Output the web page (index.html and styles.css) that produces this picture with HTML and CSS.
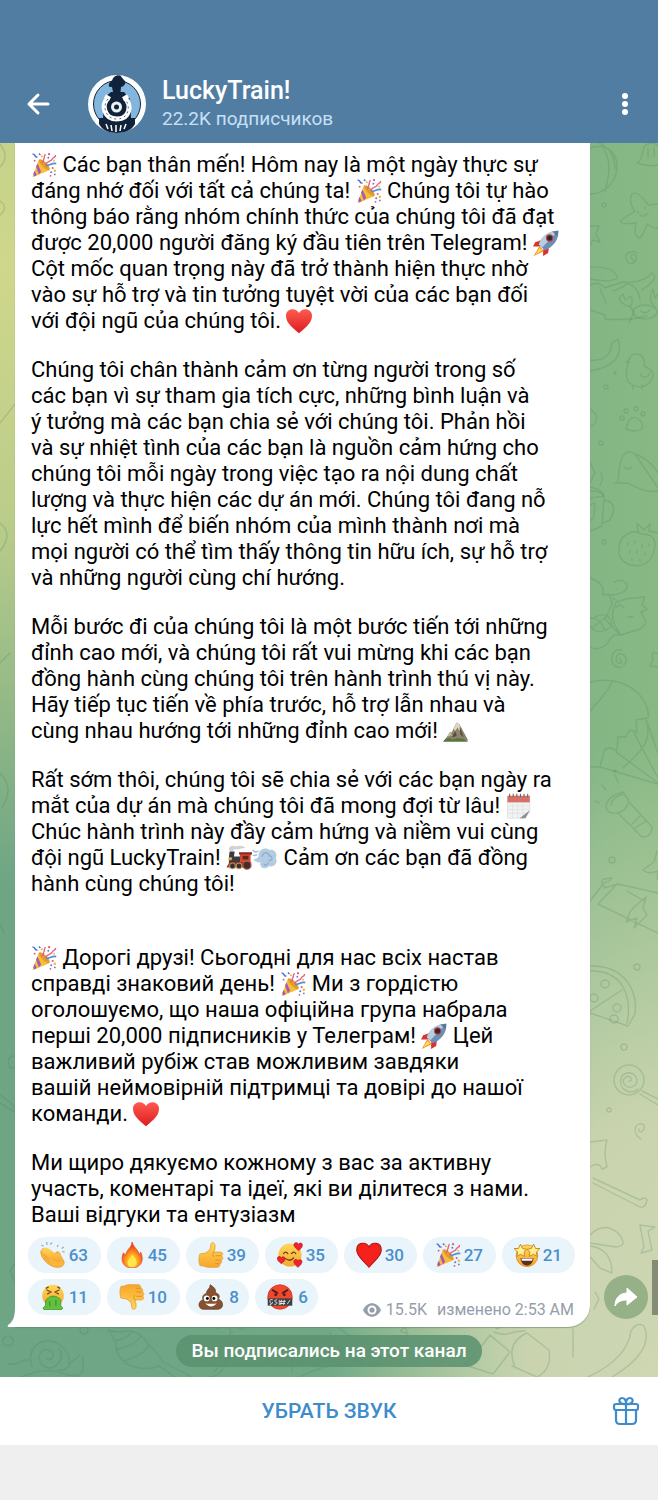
FILE: index.html
```html
<!DOCTYPE html>
<html lang="ru">
<head>
<meta charset="utf-8">
<meta name="viewport" content="width=device-width, initial-scale=1">
<title>LuckyTrain!</title>
<link rel="stylesheet" href="styles.css">
</head>
<body>
<svg class="sprite" aria-hidden="true">
  <defs>
    <linearGradient id="gold" x1="0" y1="0" x2="0" y2="1"><stop offset="0" stop-color="#ffd75a"/><stop offset="1" stop-color="#f7a62b"/></linearGradient>
    <linearGradient id="red" x1="0" y1="0" x2="0" y2="1"><stop offset="0" stop-color="#ff5a4e"/><stop offset="1" stop-color="#dd1c22"/></linearGradient>
    <radialGradient id="fireg" cx=".5" cy=".75" r=".7"><stop offset="0" stop-color="#ffe94a"/><stop offset=".4" stop-color="#ffa51e"/><stop offset="1" stop-color="#e8281a"/></radialGradient>
  </defs>
  <symbol id="party" viewBox="0 0 36 36">
    <path d="M11 10 L26 25 L2 35 Z" fill="#f8bd35"/>
    <path d="M9 16 L14 27 L11 31 L7 20 Z M5 26 L8 32 L5 34 L3 31 Z" fill="#a45bb5"/>
    <ellipse cx="18.500" cy="17.500" rx="3.500" ry="10" transform="rotate(-45 18.500 17.500)" fill="#e39b2c"/>
    <path d="M15 15 C19 13 17 7 20 3 M20 18 C23 11 27 15 30 9 C31 7 34 8 34 4" fill="none" stroke="#e5617f" stroke-width="2"/>
    <path d="M21 19 C27 18 29 15 35 16" fill="none" stroke="#4c8fe0" stroke-width="2.400"/>
    <path d="M2 3 C7 2 4 8 9 7 M11 2 L13 4" fill="none" stroke="#4a6fd8" stroke-width="2"/>
    <g fill="#e5517a"><circle cx="25" cy="3" r="1.500"/><circle cx="30" cy="22" r="1.400"/><circle cx="5" cy="12" r="1.300"/><circle cx="27" cy="33" r="1.300"/></g>
    <g fill="#f7b431"><circle cx="33" cy="26" r="1.700"/><circle cx="15" cy="6" r="1.400"/><circle cx="32" cy="12" r="1.300"/></g>
    <g fill="#5a7bd8"><circle cx="28" cy="28" r="1.400"/><circle cx="24" cy="8" r="1.300"/><circle cx="33" cy="31" r="1.200"/></g>
  </symbol>
  <symbol id="rocket" viewBox="0 0 36 36">
    <path d="M12 14 L3 17 L0 23 L10 23 Z M22 24 L21 32 L14 36 L14 27 Z" fill="#d9332e"/>
    <path d="M9 22 L1 36 L15 29 Z" fill="#f58a22"/><path d="M9 25 L3 34 L13 28 Z" fill="#ffe25a"/>
    <path d="M8 20 C11 9 22 1 35 1 C36 13 28 24 16 28 Z" fill="#6d8fb6"/>
    <path d="M8 20 C11 9 22 1 35 1 L13 24 Z" fill="#b6cde2"/>
    <path d="M27 2 L35 1 L34 9 Z" fill="#56779d"/>
    <circle cx="23" cy="11" r="5" fill="#c33b36"/><circle cx="23" cy="11" r="3.500" fill="#2a2c36"/>
  </symbol>
  <symbol id="heart" viewBox="0 0 36 36">
    <path d="M18 35 C12 29 0 22 0 11 C0 0 14 -1 18 7 C22 -1 36 0 36 11 C36 22 24 29 18 35 Z" fill="url(#red)"/>
  </symbol>
  <symbol id="flatheart" viewBox="0 0 36 36">
    <path d="M18 35 C10 25 1 20 1 11 C1 0 14 -1 18 7 C22 -1 35 0 35 11 C35 20 26 25 18 35 Z" fill="#f5211d" stroke="#b81614" stroke-width="1.500"/>
  </symbol>
  <symbol id="mountain" viewBox="0 0 36 36">
    <path d="M2 31 L10 19 L12 20 L19 6 L23 9 L35 31 Z" fill="#8f846b"/>
    <path d="M19 6 L15 15 L17 18 L20 13 L23 18 L24 12 L22 8 Z" fill="#ded7bd"/>
    <path d="M10 19 L6 26 L11 24 L14 27 Z" fill="#c9bf97"/>
    <path d="M23 12 L29 27 L24 23 Z M17 18 L12 27 L19 25 Z" fill="#544e45"/>
    <path d="M0 33 C3 27 9 27 13 30 C20 26 31 28 35 33 Z" fill="#56763c"/>
  </symbol>
  <symbol id="calendar" viewBox="0 0 36 36">
    <path d="M2 4 H33 V27 L25 35 H2 Z" fill="#f1f2f1" stroke="#dcdfdf"/>
    <path d="M2 4 H33 V13 H2 Z" fill="#d8706a"/>
    <path d="M2 18 H33 M2 23 H33 M2 28 H30 M9 13 V35 M16 13 V35 M23 13 V35" stroke="#dde0e0" stroke-width="1"/>
    <path d="M33 24 L19 35 L27 35 Z" fill="#8b9194"/>
    <path d="M5 1 V6 M10 1 V6 M15 1 V6 M20 1 V6 M25 1 V6 M30 1 V6" stroke="#6d6366" stroke-width="1.500"/>
  </symbol>
  <symbol id="loco" viewBox="0 0 36 36">
    <path d="M4 6 C4 1 10 0 14 2 C19 0 24 1 27 4 C20 4 18 7 12 6 C9 9 5 10 4 6 Z" fill="#d4d2d0"/>
    <path d="M5 9 H12 L11 16 H20 V27 H4 V17 Z" fill="#3a3c40"/>
    <path d="M19 12 H35 V14 H34 V28 H20 Z" fill="#d4472f"/><path d="M18 10 H36 V13 H18 Z" fill="#8a2c22"/>
    <path d="M23 15 H31 V20 H23 Z" fill="#59282a"/>
    <path d="M1 30 L5 24 H35 V31 H1 Z" fill="#a5382b"/>
    <circle cx="9" cy="29" r="4" fill="#3a3033" stroke="#d2a85a" stroke-width="1.200"/><circle cx="18" cy="29" r="4" fill="#3a3033" stroke="#d2a85a" stroke-width="1.200"/><circle cx="29" cy="28" r="5.500" fill="#3a3033" stroke="#c6513b" stroke-width="1.500"/>
    <circle cx="6" cy="19" r="2.500" fill="#e0a94a"/>
  </symbol>
  <symbol id="dash" viewBox="0 0 36 36">
    <path d="M9 16 C8 6 19 2 24 7 C31 5 36 12 33 18 C37 25 29 32 24 29 C17 36 9 30 12 24 C8 25 5 22 2 21 C4 18 7 20 9 16 Z" fill="#b3cce2"/>
    <path d="M14 16 C15 9 23 9 24 15 C30 16 28 23 23 21 M16 27 C20 29 23 26 22 24" fill="none" stroke="#8fb0cf" stroke-width="2"/>
    <path d="M1 7 C4 11 7 10 9 8 M1 14 C4 15 6 14 7 13" fill="none" stroke="#a3bfd8" stroke-width="2"/>
  </symbol>
  <symbol id="clap" viewBox="0 0 36 36">
    <path d="M2 18 C0 14 2 8 7 9 L21 17 C22 12 27 13 28 17 C30 23 35 27 33 31 C29 37 19 36 11 30 C6 26 3 22 2 18 Z" fill="#fbb63c" stroke="#e0912a" stroke-width="1"/>
    <path d="M5 9 C9 6 14 10 22 17 C27 14 30 18 30 26 C26 31 15 26 4 15 C2 12 3 10 5 9 Z" fill="url(#gold)"/>
    <path d="M4 17 L13 24 M6 22 L14 28" stroke="#e39a30" stroke-width="1.200"/>
    <path d="M2 4 L5 6 M9 0 L10 4 M14 3 L17 1 M25 4 L24 7 M33 7 L30 9 M31 13 L34 14" stroke="#9ca8b3" stroke-width="1.600"/>
  </symbol>
  <symbol id="fire" viewBox="0 0 36 36">
    <path d="M18 0 C20 8 27 10 28 18 L30 14 C36 27 29 36 18 36 C7 36 1 27 6 15 C7 16 8 17 9 19 C10 10 18 8 18 0 Z" fill="url(#fireg)" stroke="#e44a22"/>
    <path d="M18 17 C21 22 26 24 24 31 C22 36 13 36 12 30 C11 24 17 23 18 17 Z" fill="#ffe64b"/>
  </symbol>
  <symbol id="thumb" viewBox="0 0 36 36">
    <path d="M2 19 C1 17 3 16 6 16 C12 16 14 13 17 9 C18 6 17 1 20 1 C25 1 24 9 22 14 H31 C35 14 35 19 32 19 C36 21 34 25 32 25 C34 28 32 30 30 30 C31 33 29 35 26 35 H14 C9 35 8 32 3 33 C1 29 1 24 2 19 Z" fill="url(#gold)" stroke="#e7a033" stroke-width="1.200"/>
    <path d="M32 19 H24 M31 25 H24 M30 30 H24 M22 14 C20 17 20 19 22 21" fill="none" stroke="#dc9025" stroke-width="1.300"/>
  </symbol>
  <symbol id="love" viewBox="0 0 36 36">
    <circle cx="18" cy="18" r="16" fill="url(#gold)"/>
    <path d="M9 16 Q12 12 15 16 M20 16 Q23 12 26 16 M12 23 Q18 28 23 22" fill="none" stroke="#653720" stroke-width="1.700" stroke-linecap="round"/>
    <path d="M30 12 C26 8 22 6 24 2 C26 0 29 1 30 3 C32 0 36 2 35 5 C35 8 32 10 30 12 Z M6 30 C2 27 -1 24 1 21 C3 19 6 21 6 22 C8 19 12 21 11 24 C11 27 8 28 6 30 Z M29 35 C25 32 22 28 24 25 C26 23 29 25 29 26 C32 23 36 25 34 29 C33 32 31 33 29 35 Z" fill="#ed2430" stroke="#ba1822"/>
  </symbol>
  <symbol id="stars" viewBox="0 0 36 36">
    <circle cx="18" cy="19" r="15" fill="url(#gold)" stroke="#d98920"/>
    <path d="M9 22 H27 C26 36 10 36 9 22 Z" fill="#5e2f1c"/><path d="M10 23 H26 L25 26 H11 Z" fill="#fff"/>
    <path d="M9 3 L12 9 L17 10 L14 14 L15 20 L9 17 L4 20 L5 14 L0 9 L6 9 Z M27 3 L30 9 L36 9 L31 14 L32 20 L27 17 L21 20 L22 14 L18 10 L24 9 Z" fill="#fff08b" stroke="#c48328" stroke-width="1.300"/>
  </symbol>
  <symbol id="sick" viewBox="0 0 36 36">
    <circle cx="18" cy="16" r="15" fill="url(#gold)"/>
    <path d="M9 8 L15 11 L10 14 M27 8 L21 11 L26 14 M8 6 L12 4 M28 6 L24 4" fill="none" stroke="#79451f" stroke-width="1.700"/>
    <path d="M12 19 C14 16 22 16 25 19 C31 21 28 27 29 31 C33 32 31 36 28 36 H8 C4 36 3 32 7 31 C9 28 5 22 12 19 Z" fill="#63bf3e" stroke="#379028"/>
    <path d="M13 24 L14 31 M22 22 V30" stroke="#388d2b" stroke-width="1.500"/>
  </symbol>
  <symbol id="poop" viewBox="0 0 36 36">
    <path d="M17 1 C20 3 26 7 24 12 C29 13 31 17 28 21 C35 22 37 34 28 35 H7 C-1 34 0 23 7 22 C5 17 8 14 12 13 C11 8 17 7 17 1 Z" fill="#87502f" stroke="#643a25"/>
    <circle cx="12" cy="20" r="4" fill="#fff"/><circle cx="23" cy="20" r="4" fill="#fff"/><circle cx="13" cy="20" r="2"/><circle cx="22" cy="20" r="2"/>
    <path d="M10 27 Q18 28 26 27 Q18 35 10 27" fill="#fff"/>
  </symbol>
  <symbol id="rage" viewBox="0 0 36 36">
    <circle cx="18" cy="18" r="17" fill="#ef492d" stroke="#c92f20"/>
    <path d="M7 8 L15 13 M29 8 L21 13" stroke="#571a18" stroke-width="2.500"/><circle cx="12" cy="15" r="2" fill="#571a18"/><circle cx="24" cy="15" r="2" fill="#571a18"/>
    <path d="M1 20 H35 V30 H1 Z" fill="#3b4044"/>
    <path d="M8 22 C2 20 4 26 6 27 C2 29 5 31 8 25 M14 22 C9 22 10 25 13 25 C15 27 12 29 10 28 M17 22 V29 M20 22 L19 29 M24 22 L23 29 M18 24 H26 M18 27 H25 M28 28 L32 22" fill="none" stroke="#fff" stroke-width="1.100"/>
  </symbol>
</svg>

<header class="header">
  <div class="bar">
    <button class="icon-button back" type="button" aria-label="Назад">
      <svg width="24" height="24" viewBox="0 0 24 24"><path d="M22 12 H3 M12 3 L3 12 L12 21" fill="none" stroke="#fff" stroke-width="3" stroke-linecap="round" stroke-linejoin="round"/></svg>
    </button>
    <svg class="avatar" viewBox="0 0 58 58" aria-hidden="true">
      <circle cx="29" cy="29" r="29" fill="#fdfefe"/><circle cx="29" cy="29" r="23.500" fill="#83b6dc" stroke="#14283f" stroke-width="1"/>
      <path d="M23 12 C19 12 21 7 24 6 C25 1 30 -1 33 1 C34 4 39 6 37 9 C36 11 34 12 33 12 Z" fill="#10233a"/>
      <path d="M24 12 H33 L32 22 H26 Z M17 22 L23 17 H36 L42 24 L43 43 H47 V49 C44 55 37 58 29 58 C21 58 14 55 11 49 V43 H15 Z" fill="#10233a"/>
      <path d="M20 23 C13 30 16 44 29 44 C42 44 44 30 37 23" fill="none" stroke="#fff" stroke-width="5"/>
      <path d="M17 21 L22 24 M40 21 L35 24" stroke="#fff" stroke-width="4"/>
      <path d="M20 24 C14 31 17 44 29 44 C41 44 43 31 37 24" fill="none" stroke="#4f6880" stroke-width="1" stroke-dasharray="2 3"/>
      <circle cx="28.500" cy="32" r="9" fill="#10233a"/><circle cx="28.500" cy="32" r="5.500" fill="#eaf1f7"/><circle cx="28.500" cy="32" r="2.500" fill="#10233a"/>
      <path d="M18 49 L20 54 M23 50 L24 56 M28 50 V57 M33 50 L32 56 M38 49 L36 54" stroke="#fff" stroke-width="1.500"/>
    </svg>
    <div class="heading">
      <h1 class="title">LuckyTrain!</h1>
      <p class="subtitle">22.2K подписчиков</p>
    </div>
    <button class="icon-button more" type="button" aria-label="Меню">
      <svg width="8" height="24" viewBox="0 0 8 24"><g fill="#fff"><circle cx="4" cy="4" r="3"/><circle cx="4" cy="12" r="3"/><circle cx="4" cy="20" r="3"/></g></svg>
    </button>
  </div>
</header>

<main class="chat">
  <svg class="doodles doodles-right" width="68" height="1234" viewBox="0 0 68 1234" aria-hidden="true">
    <path d="M0 5 C36 -6 36 50 0 51 M10 0 C22 15 20 30 15 48 M9 0 Q25 7 25 26 M47 20 C50 17 52 15 53 8 C54 -1 64 -2 68 3 M47 20 Q58 24 68 22 M58 6 V14 M64 5 V13"/>
    <path d="M42 51 Q48 47 58 62 L68 61 M42 51 Q38 59 45 68 L30 78 Q32 82 46 80 Q43 94 50 95 Q55 89 57 81 Q66 87 68 84 M48 68 V70 M55 64 V66 M50 72 Q54 75 58 70"/>
    <circle cx="14" cy="62" r="2"/><path d="M0 83 H9 L6 91 L10 99 L3 97 L0 102 M45 118 C38 116 42 108 46 113 C49 119 38 125 36 116 C34 109 44 107 47 110"/>
    <path d="M0 124 Q25 123 27 135 Q20 140 0 136 M0 142 Q9 138 15 145 L20 143 L34 139 Q49 143 50 157 M0 167 L15 172 L15 176 Q40 178 57 173 M10 145 L16 160 M40 139 Q54 139 62 130 Q68 134 60 141 L52 147 M23 148 Q38 143 37 139"/>
    <ellipse cx="55" cy="169" rx="12" ry="7"/><path d="M40 164 Q24 158 33 151 L35 157 L41 153 Q44 160 40 164 L44 169 L39 180 M65 164 Q57 157 63 146 L65 155 L68 151 M51 168 Q55 172 60 167"/>
    <path d="M0 217 Q20 219 22 200 L28 196 Q36 222 0 228"/><circle cx="25" cy="230" r="1"/><circle cx="16" cy="244" r="2"/>
    <path d="M39 219 C38 207 57 208 54 223 Q66 228 62 236 Q53 250 38 239 Q34 229 39 219 L36 219 L40 216 M50 231 Q55 238 60 230 M43 242 V246 M52 242 V246"/><path d="M36 286 Q40 270 48 276 Q54 280 52 286 Q45 290 36 286"/><circle cx="32" cy="275" r="2"/><circle cx="36" cy="268" r="2"/><circle cx="46" cy="266" r="2"/><circle cx="53" cy="271" r="2"/><circle cx="11" cy="300" r="2"/>
    <path d="M0 266 Q10 272 5 280 Q3 284 0 282 M0 319 L5 330 L0 340 M11 330 Q14 335 10 342 M0 344 Q13 347 14 353 L0 355 M28 338 Q30 303 43 310 Q60 316 68 330 M45 311 L68 345 M25 340 H38 Q54 350 68 348 M34 324 Q38 328 42 324"/>
    <path d="M0 348 Q14 348 14 355 L12 383 L0 388 M15 357 Q29 360 20 377 L13 380 M0 362 L5 360 L4 374 L0 378 M36 392 Q44 386 52 391 Q66 391 65 403 C62 431 32 425 29 411 Q28 396 36 392 M48 390 L47 380 L54 387 L60 381 L59 388 L68 390"/><circle cx="14" cy="399" r="2"/>
    <path d="M38 400 V402 M45 398 V400 M52 402 V404 M40 408 V410 M47 408 V410 M55 410 V412 M42 416 V418 M50 416 V418 M59 401 V403"/>
    <path d="M0 435 Q15 440 13 451 L22 452 Q39 450 37 441 Q32 435 24 439 M12 452 Q21 449 22 461 L15 476 L30 492 Q22 490 18 500 Q8 509 0 504 M23 455 L28 459 Q37 455 44 455 L55 454 L52 462 L57 466 L51 469 L55 477 Q58 480 50 486 L31 492 Q17 475 26 460 M26 465 Q30 459 34 465 M38 474 H43 M5 474 Q20 467 22 483 Q8 494 0 483 M2 485 L18 472 M0 475 Q11 475 14 486"/>
    <path d="M30 516 C35 520 27 523 26 516 C27 506 38 512 36 519 C32 528 20 525 22 514 Q24 505 31 507 M68 511 Q60 506 63 516 L60 523 L68 524"/>
    <path d="M0 539 C41 530 61 560 58 575 L46 577 L47 590 Q39 583 36 594 L28 594 L27 608 Q18 602 14 608 L10 624 L0 624 M22 539 Q17 550 0 568 M57 579 L68 610 M44 590 L68 635 M26 609 L68 640 M10 624 L68 641 M56 576 C64 600 48 610 33 625"/>
    <path d="M16 664 Q17 653 33 649 L39 658 Q35 671 24 670 Q18 671 16 664 M21 662 Q22 654 33 651 M28 670 L52 694 Q62 694 62 684 L40 660 M42 681 L50 673 M45 685 L56 678 M12 642 L16 647 M25 632 L28 639 M5 658 L9 660"/>
    <circle cx="25" cy="628" r="1"/><circle cx="22" cy="717" r="3"/><path d="M53 727 L64 719 L67 708 M53 727 Q58 732 68 728 L67 736"/>
    <path d="M0 758 L14 740 Q21 738 22 735 L13 736 Q10 741 15 744 M14 745 L28 741 L68 750 M8 761 L68 790 M8 761 L27 741 M37 748 L54 758 M44 764 L56 754 L53 765 L57 772 L44 785 L47 775 L36 779 L40 769 Z"/>
    <circle cx="47" cy="824" r="3"/><path d="M0 823 C35 822 48 848 45 871 L38 883 L0 870 M0 828 C34 827 42 855 37 880 M0 868 L32 847"/><circle cx="15" cy="841" r="4"/><circle cx="27" cy="865" r="4"/><circle cx="4" cy="855" r="4"/><circle cx="24" cy="876" r="4"/><circle cx="34" cy="904" r="3"/>
    <circle cx="39" cy="937" r="15"/><path d="M39 938 C43 939 41 931 36 934 C29 939 37 947 44 943 C53 936 40 924 32 933 C26 947 42 953 48 946 M52 948 L68 956 M50 951 L68 962"/><circle cx="19" cy="967" r="2"/><path d="M51 996 C40 989 46 977 54 982 C56 989 47 991 49 986"/>
    <path d="M0 999 L17 997 Q13 1010 17 1024 L12 1026 Q9 1018 0 1024 M3 1035 L50 1057 Q55 1053 57 1057 Q55 1068 46 1062 L3 1040 M0 1092 Q14 1078 28 1090 Q39 1103 26 1104 L0 1100 M0 1103 Q22 1106 22 1130 L10 1125 L0 1114 M50 1082 L65 1084 L58 1088 L62 1107 L51 1110 L54 1104 Z M4 1166 L9 1156 L5 1149"/>
  </svg>
  <svg class="doodles doodles-bottom" width="658" height="56" viewBox="0 0 658 56" aria-hidden="true">
    <circle cx="8" cy="20" r="5"/><circle cx="84" cy="9" r="4"/>
    <path d="M8 43 C18 45 20 38 28 39 M32 46 C25 28 42 14 57 22 Q71 30 69 43 L80 34 M83 36 V49 Q80 58 65 53 Q45 45 22 56 M46 37 C52 42 57 33 49 29 C39 26 35 40 45 46 C57 51 67 34 58 27 M70 44 Q64 51 58 49"/>
    <path d="M108 9 Q115 12 130 10 Q141 11 149 24 Q158 32 163 41 L192 56 M109 10 Q114 18 116 22 Q115 35 127 43 Q145 51 159 45 L175 56 M115 20 Q130 16 131 11 M116 29 Q136 24 141 15 M124 40 Q144 34 149 24 M161 0 Q171 6 180 0 M217 8 A6 6 0 1 1 230 14 M239 7 L244 9"/>
    <path d="M210 56 C230 55 224 24 252 18 C280 15 295 30 292 51 M213 52 L229 34 M244 31 Q256 21 261 34 Q253 44 244 31 M270 20 Q263 40 275 45 M300 56 Q325 42 346 44 Q370 47 385 35 M335 3 Q352 22 398 32 M400 10 L405 6 L408 13 Z M330 12 C340 40 374 55 397 35"/>
    <path d="M480 27 L490 14 L510 31 L493 53 L465 44 Z M494 11 C510 17 510 9 525 10 M515 46 Q505 22 527 12 L549 29 Q552 49 537 56 L512 45 M491 5 C501 -2 503 7 496 8 M514 6 L520 4 L515 0 M573 8 V36 M588 56 Q627 38 631 10 Q637 0 644 5 Q655 30 612 56"/>
  </svg>
  <svg class="doodles doodles-left" width="16" height="1234" viewBox="0 0 16 1234" aria-hidden="true"><path d="M0 1 Q10 14 0 24 M0 58 Q9 64 0 72 M16 260 L0 280 M0 380 Q14 391 0 408 M10 510 L0 520 M0 630 Q15 645 2 664 M0 781 L4 790 M16 913 Q5 912 10 925 L16 924 M0 952 Q17 962 14 969 L0 960 M16 1119 L10 1128 L16 1141"/></svg>

  <div class="message-row">
    <article class="bubble">
      <div class="message" lang="vi">
        <p><svg class="emoji" role="img" aria-label="🎉"><use href="#party"/></svg> Các bạn thân mến! Hôm nay là một ngày thực sự<br>
        đáng nhớ đối với tất cả chúng ta! <svg class="emoji" role="img" aria-label="🎉"><use href="#party"/></svg> Chúng tôi tự hào<br>
        thông báo rằng nhóm chính thức của chúng tôi đã đạt<br>
        được 20,000 người đăng ký đầu tiên trên Telegram! <svg class="emoji" role="img" aria-label="🚀"><use href="#rocket"/></svg><br>
        Cột mốc quan trọng này đã trở thành hiện thực nhờ<br>
        vào sự hỗ trợ và tin tưởng tuyệt vời của các bạn đối<br>
        với đội ngũ của chúng tôi. <svg class="emoji" role="img" aria-label="❤️"><use href="#heart"/></svg></p>
        <p>Chúng tôi chân thành cảm ơn từng người trong số<br>
        các bạn vì sự tham gia tích cực, những bình luận và<br>
        ý tưởng mà các bạn chia sẻ với chúng tôi. Phản hồi<br>
        và sự nhiệt tình của các bạn là nguồn cảm hứng cho<br>
        chúng tôi mỗi ngày trong việc tạo ra nội dung chất<br>
        lượng và thực hiện các dự án mới. Chúng tôi đang nỗ<br>
        lực hết mình để biến nhóm của mình thành nơi mà<br>
        mọi người có thể tìm thấy thông tin hữu ích, sự hỗ trợ<br>
        và những người cùng chí hướng.</p>
        <p>Mỗi bước đi của chúng tôi là một bước tiến tới những<br>
        đỉnh cao mới, và chúng tôi rất vui mừng khi các bạn<br>
        đồng hành cùng chúng tôi trên hành trình thú vị này.<br>
        Hãy tiếp tục tiến về phía trước, hỗ trợ lẫn nhau và<br>
        cùng nhau hướng tới những đỉnh cao mới! <svg class="emoji" role="img" aria-label="⛰️"><use href="#mountain"/></svg></p>
        <p>Rất sớm thôi, chúng tôi sẽ chia sẻ với các bạn ngày ra<br>
        mắt của dự án mà chúng tôi đã mong đợi từ lâu! <svg class="emoji" role="img" aria-label="🗓️"><use href="#calendar"/></svg><br>
        Chúc hành trình này đầy cảm hứng và niềm vui cùng<br>
        đội ngũ LuckyTrain! <svg class="emoji" role="img" aria-label="🚂"><use href="#loco"/></svg><svg class="emoji" role="img" aria-label="💨"><use href="#dash"/></svg> Cảm ơn các bạn đã đồng<br>
        hành cùng chúng tôi!</p>
      </div>
      <div class="message" lang="uk">
        <p><svg class="emoji" role="img" aria-label="🎉"><use href="#party"/></svg> Дорогі друзі! Сьогодні для нас всіх настав<br>
        справді знаковий день! <svg class="emoji" role="img" aria-label="🎉"><use href="#party"/></svg> Ми з гордістю<br>
        оголошуємо, що наша офіційна група набрала<br>
        перші 20,000 підписників у Телеграм! <svg class="emoji" role="img" aria-label="🚀"><use href="#rocket"/></svg> Цей<br>
        важливий рубіж став можливим завдяки<br>
        вашій неймовірній підтримці та довірі до нашої<br>
        команди. <svg class="emoji" role="img" aria-label="❤️"><use href="#heart"/></svg></p>
        <p>Ми щиро дякуємо кожному з вас за активну<br>
        участь, коментарі та ідеї, які ви ділитеся з нами.<br>
        Ваші відгуки та ентузіазм</p>
      </div>
      <footer class="reactions">
        <button class="reaction" type="button"><svg class="emoji" role="img" aria-label="👏"><use href="#clap"/></svg>63</button>
        <button class="reaction" type="button"><svg class="emoji" role="img" aria-label="🔥"><use href="#fire"/></svg>45</button>
        <button class="reaction" type="button"><svg class="emoji" role="img" aria-label="👍"><use href="#thumb"/></svg>39</button>
        <button class="reaction" type="button"><svg class="emoji" role="img" aria-label="🥰"><use href="#love"/></svg>35</button>
        <button class="reaction" type="button"><svg class="emoji" role="img" aria-label="❤️"><use href="#flatheart"/></svg>30</button>
        <button class="reaction" type="button"><svg class="emoji" role="img" aria-label="🎉"><use href="#party"/></svg>27</button>
        <button class="reaction" type="button"><svg class="emoji" role="img" aria-label="🤩"><use href="#stars"/></svg>21</button>
        <button class="reaction" type="button"><svg class="emoji" role="img" aria-label="🤮"><use href="#sick"/></svg>11</button>
        <button class="reaction" type="button"><svg class="emoji flipped" role="img" aria-label="👎"><use href="#thumb"/></svg>10</button>
        <button class="reaction short" type="button"><svg class="emoji" role="img" aria-label="💩"><use href="#poop"/></svg>8</button>
        <button class="reaction short" type="button"><svg class="emoji" role="img" aria-label="🤬"><use href="#rage"/></svg>6</button>
        <div class="meta">
          <svg width="18" height="14" viewBox="0 0 18 14" aria-hidden="true"><path d="M0 7 C4 -2 14 -2 18 7 C14 16 4 16 0 7 Z" fill="#949eaa"/><circle cx="9" cy="7" r="4.500" fill="#fff"/><circle cx="9" cy="7" r="2.600" fill="#949eaa"/></svg>
          <span>15.5K</span><span class="edited">изменено 2:53 AM</span>
        </div>
      </footer>
      <svg class="tail" width="9" height="20" viewBox="0 0 9 20" aria-hidden="true"><path d="M9 0 H8 C8 10 6 15 1 18 Q0 20 2 20 H9 Z" fill="#fff"/></svg>
    </article>
    <div class="side">
      <button class="share" type="button" aria-label="Поделиться">
        <svg width="24" height="24" viewBox="0 0 24 24"><path d="M13 3 L23 12 L13 20 V15 C8 15 4 16 1 21 C1 13 6 8 13 8 Z" fill="#fff" stroke="#fff" stroke-linejoin="round"/></svg>
      </button>
    </div>
  </div>
  <p class="service">Вы подписались на этот канал</p>
  <div class="scroll-thumb"></div>
</main>

<div class="bottom-bar">
  <button class="mute" type="button">УБРАТЬ ЗВУК</button>
  <button class="gift" type="button" aria-label="Подарок">
    <svg width="28" height="30" viewBox="0 0 28 30"><g fill="none" stroke="#3e8ccc" stroke-width="2.200" stroke-linejoin="round"><rect x="2" y="8" width="24" height="6" rx="2"/><path d="M4 14 V24 Q4 28 8 28 H20 Q24 28 24 24 V14 M14 8 V28"/><path d="M14 8 C6 9 6 2 10 2 C13 2 14 5 14 8 C14 5 15 2 18 2 C22 2 22 9 14 8"/></g></svg>
  </button>
</div>
<div class="nav-area"></div>
</body>
</html>
```
FILE: styles.css
```css
* {
  box-sizing: border-box;
}

body {
  margin: 0;
  min-height: 100vh;
  display: flex;
  flex-direction: column;
  background: #efefef;
  font-family: Roboto, "Noto Sans", sans-serif;
  color: #000;
}

h1,
p {
  margin: 0;
}

button {
  padding: 0;
  border: 0;
  background: none;
  font-family: inherit;
}

svg {
  display: block;
}

.sprite {
  position: absolute;
  width: 0;
  height: 0;
}

.header {
  padding-top: 65px;
  background: #527da3;
  color: #fff;
}

.bar {
  display: flex;
  align-items: center;
  height: 78px;
  padding: 0 13px 0 26px;
}

.icon-button {
  display: grid;
  place-items: center;
  height: 48px;
}

.back {
  width: 24px;
}

.more {
  width: 40px;
}

.avatar {
  width: 58px;
  height: 58px;
  margin-left: 38px;
}

.heading {
  flex: 1;
  margin-left: 16px;
}

.title {
  font-size: 25px;
  line-height: 30px;
  font-weight: 500;
}

.subtitle {
  font-size: 19px;
  line-height: 26px;
  color: #c6e0f7;
}

.chat {
  position: relative;
  isolation: isolate;
  display: flex;
  flex-direction: column;
  align-items: center;
  padding-bottom: 10px;
  overflow: hidden;
  background:
    radial-gradient(ellipse 420px 620px at 0 10%, #cfd78b 0, #cfd78bcc 40%, #cfd78b00 100%),
    radial-gradient(ellipse 330px 640px at 100% 100%, #ced6b2 0, #ced6b2ee 40%, #ced6b200 100%),
    linear-gradient(90deg, #6da585 0, #71a987 50%, #88b984 100%);
}

.doodles {
  position: absolute;
  z-index: -1;
  fill: none;
  stroke: #4d805c;
  stroke-opacity: 0.24;
  stroke-width: 1.4;
  stroke-linecap: round;
  stroke-linejoin: round;
}

.doodles-right {
  top: 0;
  right: 0;
}

.doodles-bottom {
  bottom: 0;
  left: 0;
}

.doodles-left {
  top: 0;
  left: 0;
}

.message-row {
  display: flex;
  width: 100%;
  padding-left: 15px;
}

.bubble {
  position: relative;
  flex: 1;
  min-width: 0;
  padding: 9px 13px 6px;
  background: #fff;
  border-bottom-right-radius: 22px;
  box-shadow: 0 1px 1px #5a7d5a88;
}

.tail {
  position: absolute;
  left: -8px;
  bottom: 0;
}

.message {
  display: flex;
  flex-direction: column;
  gap: 23px;
  padding-left: 3px;
  font-size: 22px;
  line-height: 26px;
}

.message + .message {
  margin-top: 48px;
}

.emoji {
  width: 26px;
  height: 26px;
}

.message .emoji {
  display: inline-block;
  vertical-align: top;
}

.flipped {
  transform: scaleY(-1);
}

.reactions {
  display: flex;
  flex-wrap: wrap;
  align-items: flex-start;
  gap: 6px;
  margin-top: 9px;
}

.reaction {
  display: flex;
  align-items: center;
  justify-content: space-between;
  width: 73px;
  height: 36px;
  padding: 0 13px 0 12px;
  border-radius: 18px;
  background: #e9f4fb;
  color: #4a8fcb;
  font-size: 17px;
  font-weight: 500;
}

.short {
  width: 63px;
  padding-right: 10px;
}

.meta {
  display: flex;
  align-items: center;
  gap: 5px;
  margin: 20px 3px 0 auto;
  font-size: 16px;
  line-height: 22px;
  color: #949eaa;
}

.edited {
  margin-left: 5px;
}

.side {
  display: flex;
  align-items: flex-end;
  justify-content: center;
  width: 68px;
  padding: 0 0 8px 3px;
}

.share {
  display: grid;
  place-items: center;
  width: 44px;
  height: 44px;
  border-radius: 50%;
  background: #96b088;
}

.service {
  margin-top: 8px;
  padding: 0 15px;
  border-radius: 16px;
  background: #5a906fd9;
  color: #fff;
  font-size: 19px;
  line-height: 32px;
  font-weight: 500;
}

.scroll-thumb {
  position: absolute;
  right: 0;
  bottom: 62px;
  width: 6px;
  height: 55px;
  background: #868b75;
}

.bottom-bar {
  display: flex;
  align-items: center;
  height: 68px;
  padding-right: 18px;
  background: #fff;
}

.mute {
  flex: 1;
  height: 68px;
  padding-left: 46px;
  color: #3e8ccc;
  font-size: 21px;
  font-weight: 500;
}

.gift {
  width: 28px;
}

.nav-area {
  flex: 1;
  min-height: 55px;
}
```
